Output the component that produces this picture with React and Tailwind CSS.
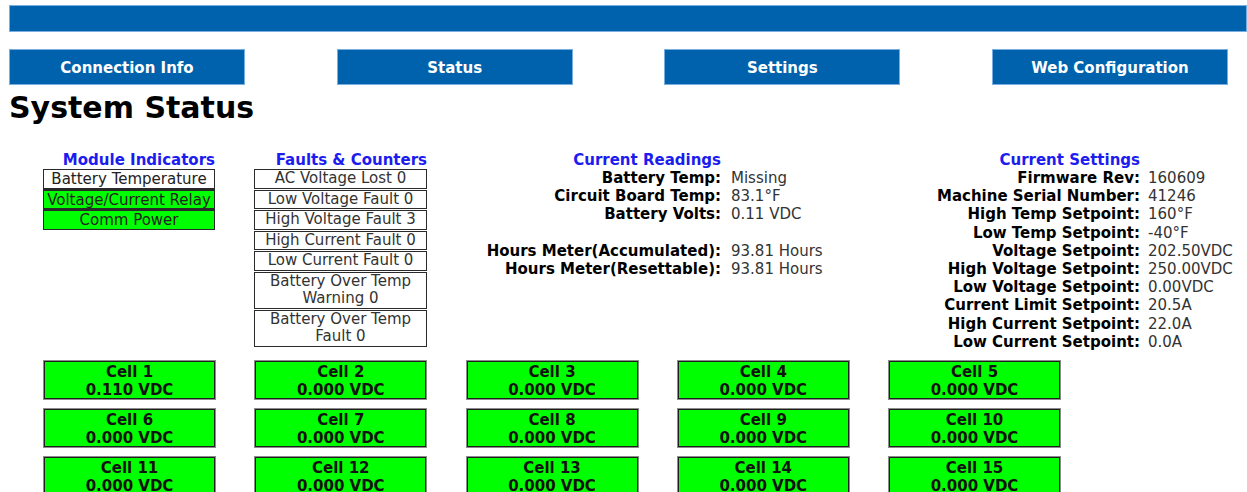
const navItems = ['Connection Info', 'Status', 'Settings', 'Web Configuration'];

const indicators = [
  { label: 'Battery Temperature', on: false },
  { label: 'Voltage/Current Relay', on: true },
  { label: 'Comm Power', on: true },
];

const faults = [
  'AC Voltage Lost 0',
  'Low Voltage Fault 0',
  'High Voltage Fault 3',
  'High Current Fault 0',
  'Low Current Fault 0',
  'Battery Over Temp Warning 0',
  'Battery Over Temp Fault 0',
];

const readings = [
  ['Battery Temp:', 'Missing'],
  ['Circuit Board Temp:', '83.1°F'],
  ['Battery Volts:', '0.11 VDC'],
];

const hours = [
  ['Hours Meter(Accumulated):', '93.81 Hours'],
  ['Hours Meter(Resettable):', '93.81 Hours'],
];

const settings = [
  ['Firmware Rev:', '160609'],
  ['Machine Serial Number:', '41246'],
  ['High Temp Setpoint:', '160°F'],
  ['Low Temp Setpoint:', '-40°F'],
  ['Voltage Setpoint:', '202.50VDC'],
  ['High Voltage Setpoint:', '250.00VDC'],
  ['Low Voltage Setpoint:', '0.00VDC'],
  ['Current Limit Setpoint:', '20.5A'],
  ['High Current Setpoint:', '22.0A'],
  ['Low Current Setpoint:', '0.0A'],
];

const cells = [
  '0.110', '0.000', '0.000', '0.000', '0.000',
  '0.000', '0.000', '0.000', '0.000', '0.000',
  '0.000', '0.000', '0.000', '0.000', '0.000',
];

function SectionTitle({ children }) {
  return <div className="text-right font-bold text-[#1c1cf0] leading-[18px]">{children}</div>;
}

function Row({ label, value, labelWidth, gap }) {
  return (
    <div className="flex">
      <div className={`${labelWidth} text-right font-bold text-black`}>{label}</div>
      <div className={`${gap} text-[#333] whitespace-nowrap`}>{value}</div>
    </div>
  );
}

export default function App() {
  return (
    <div className="h-screen overflow-hidden bg-white text-black font-['DejaVu_Sans',Verdana,sans-serif] text-[15px] leading-[18.2px]">
      <div className="pt-[5px] pl-[9px]">
        <div className="h-[27px] bg-[#0062ad] border border-[#79aee0]"></div>
        <nav className="mt-[17px] flex gap-[91.67px]">
          {navItems.map((item) => (
            <button
              key={item}
              className="w-[236px] h-[36px] shrink-0 pt-[3px] bg-[#0062ad] border border-[#79aee0] text-white font-bold text-[15px]"
            >
              {item}
            </button>
          ))}
        </nav>
        <h1 className="mt-[5px] text-[30px] leading-[36px] font-bold">System Status</h1>
      </div>

      <div className="mt-[25px] flex pl-[43px] h-[209px]">
        {/* module indicators */}
        <div className="w-[172px]">
          <SectionTitle>Module Indicators</SectionTitle>
          <div className="flex flex-col gap-px bg-[#2a2a2a]">
            {indicators.map((ind) => (
              <div
                key={ind.label}
                className={`border border-[#2a2a2a] pt-px text-center text-[#222] leading-[17px] h-[19.5px] whitespace-nowrap ${ind.on ? 'bg-[#00ff00]' : 'bg-white'}`}
              >
                {ind.label}
              </div>
            ))}
          </div>
        </div>

        {/* faults & counters */}
        <div className="ml-[39px] w-[173px]">
          <SectionTitle>Faults &amp; Counters</SectionTitle>
          <div className="flex flex-col gap-px">
            {faults.map((f) => (
              <div key={f} className="border border-[#2a2a2a] text-center text-[#333] leading-[17.5px] px-[8px]">
                {f}
              </div>
            ))}
          </div>
        </div>

        {/* current readings */}
        <div className="w-[444px]">
          <div className="w-[294px]">
            <SectionTitle>Current Readings</SectionTitle>
          </div>
          {readings.map(([l, v]) => (
            <Row key={l} label={l} value={v} labelWidth="w-[294px]" gap="pl-[10px]" />
          ))}
          <div className="h-[18px]"></div>
          {hours.map(([l, v]) => (
            <Row key={l} label={l} value={v} labelWidth="w-[294px]" gap="pl-[10px]" />
          ))}
        </div>

        {/* current settings */}
        <div>
          <div className="w-[269px]">
            <SectionTitle>Current Settings</SectionTitle>
          </div>
          {settings.map(([l, v]) => (
            <Row key={l} label={l} value={v} labelWidth="w-[269px]" gap="pl-[8px]" />
          ))}
        </div>
      </div>

      <div className="mt-px pl-[44px] grid grid-cols-[repeat(5,171px)] gap-x-[40.25px] gap-y-[10px]">
        {cells.map((v, i) => (
          <div
            key={i}
            className="h-[38px] pt-[2px] bg-[#00ff00] border border-[#1f1f1f] ring-1 ring-[#8c8c8c] text-center font-bold text-[#111] leading-[17.5px]"
          >
            <div>Cell {i + 1}</div>
            <div>{v} VDC</div>
          </div>
        ))}
      </div>
    </div>
  );
}
